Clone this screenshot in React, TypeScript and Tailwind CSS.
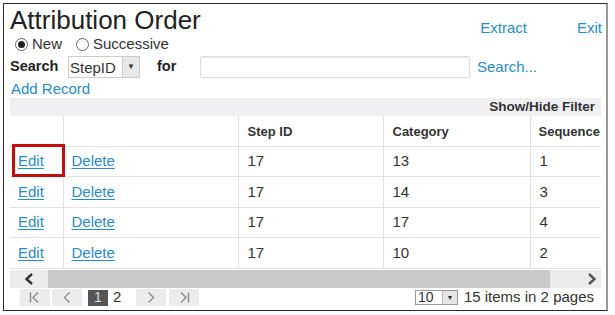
const link = "text-[#2a8cc4]";

const rows = [
  { step: "17", cat: "13", seq: "1" },
  { step: "17", cat: "14", seq: "3" },
  { step: "17", cat: "17", seq: "4" },
  { step: "17", cat: "10", seq: "2" },
];

function Radio({ checked, label }: { checked?: boolean; label: string }) {
  return (
    <label className="flex items-center gap-[4px]">
      <span className="w-[13px] h-[13px] rounded-full border border-[#666] bg-white flex items-center justify-center">
        {checked && <span className="w-[7px] h-[7px] rounded-full bg-[#222]" />}
      </span>
      <span>{label}</span>
    </label>
  );
}

function PagerBtn({ children }: { children: React.ReactNode }) {
  return (
    <div className="w-[30px] h-[17px] bg-[#ececec] flex items-center justify-center text-[#8a8a8a]">
      {children}
    </div>
  );
}

export default function App() {
  return (
    <div className="w-[615px] h-[315px] bg-white pt-[3px] pl-[3px] font-['Liberation_Sans',Arial,sans-serif] text-[#222] overflow-hidden">
      <div className="w-[605px] h-[308px] border border-[#2a2a2a] border-r-[#999] border-r-2 pl-[6px] flex flex-col overflow-hidden">
        <div className="flex items-end h-[30px]">
          <h1 className="text-[26px] leading-[28px] mt-[2px]">Attribution Order</h1>
          <div className={`ml-auto flex gap-[50px] text-[15px] ${link} mr-[4px] mb-[-5px]`}>
            <span>Extract</span>
            <span>Exit</span>
          </div>
        </div>
        <div className="flex items-center gap-[14px] text-[15px] h-[17px] ml-[5px] mt-[2px] text-[#333]">
          <Radio checked label="New" />
          <Radio label="Successive" />
        </div>
        <div className="flex items-center h-[24px] mt-[2px] text-[15px]">
          <span className="w-[58px] font-bold text-[14.5px]">Search</span>
          <div className="w-[72px] h-[22px] border border-[#ccc] flex items-stretch">
            <span className="flex-1 pl-[1px] leading-[21px] text-[15px] text-[#333]">StepID</span>
            <span className="w-[17px] bg-[#e8e8e8] border-l border-[#ccc] flex items-center justify-center text-[8px] text-[#333]">▼</span>
          </div>
          <span className="ml-[17px] w-[23px] font-bold text-[14.5px]">for</span>
          <div className="ml-[20px] w-[270px] h-[22px] border border-[#ddd] rounded-[2px] shadow-[inset_0_1px_2px_rgba(0,0,0,0.1)]" />
          <span className={`ml-[7px] ${link}`}>Search...</span>
        </div>
        <div className={`text-[15px] h-[18px] leading-[18px] mt-[1px] ml-[1px] ${link}`}>Add Record</div>
        <div className="w-[591px] flex flex-col overflow-hidden">
          <div className="h-[18px] bg-[#f0f0f3] flex items-center justify-end pr-[6px] text-[13.5px] font-bold text-[#333]">
            Show/Hide Filter
          </div>
          <table className="border-collapse text-[15px] table-fixed w-[620px]">
            <colgroup>
              <col className="w-[53px]" />
              <col className="w-[175px]" />
              <col className="w-[145px]" />
              <col className="w-[147px]" />
              <col className="w-[100px]" />
            </colgroup>
            <thead>
              <tr className="h-[30px] text-[13px] font-bold text-[#333] text-left">
                <th className="border-r border-b border-[#e2e2e2]" />
                <th className="border-r border-b border-[#e2e2e2]" />
                <th className="border-r border-b border-[#e2e2e2] pl-[9px] pt-[2px] font-bold">Step ID</th>
                <th className="border-r border-b border-[#e2e2e2] pl-[9px] pt-[2px] font-bold">Category</th>
                <th className="border-b border-[#e2e2e2] pl-[8px] pt-[2px] font-bold">Sequence</th>
              </tr>
            </thead>
            <tbody>
              {rows.map((r, i) => (
                <tr key={i} className="h-[30.5px] text-[#333]">
                  <td className="border-r border-b border-[#e2e2e2] pl-[8px] relative">
                    <span className={`${link} underline underline-offset-2`}>Edit</span>
                    {i === 0 && (
                      <div className="absolute left-[2px] top-[-3px] w-[53px] h-[33px] border-[3px] border-[#c40d0d]" />
                    )}
                  </td>
                  <td className="border-r border-b border-[#e2e2e2] pl-[8px]">
                    <span className={`${link} underline underline-offset-2`}>Delete</span>
                  </td>
                  <td className="border-r border-b border-[#e2e2e2] pl-[9px]">{r.step}</td>
                  <td className="border-r border-b border-[#e2e2e2] pl-[9px]">{r.cat}</td>
                  <td className="border-b border-[#e2e2e2] pl-[9px]">{r.seq}</td>
                </tr>
              ))}
            </tbody>
          </table>
          <div className="h-[18px] mt-[1px] bg-[#ececec] flex items-center">
            <div className="w-[38px] flex items-center justify-center">
              <svg width="10" height="12" viewBox="0 0 10 12">
                <path d="M8 1 L2.5 6 L8 11" fill="none" stroke="#333" strokeWidth="2.4" />
              </svg>
            </div>
            <div className="w-[502px] h-[18px] bg-[#c9c9c9]" />
            <div className="flex-1 flex items-center justify-end pr-[4px]">
              <svg width="10" height="12" viewBox="0 0 10 12">
                <path d="M2 1 L7.5 6 L2 11" fill="none" stroke="#555" strokeWidth="2.4" />
              </svg>
            </div>
          </div>
          <div className="h-[20px] flex items-center text-[15px]">
            <div className="ml-[10px] flex items-center gap-[2px]">
              <PagerBtn>
                <svg width="12" height="11" viewBox="0 0 12 11">
                  <path d="M1.5 0.5 V10.5 M9 0.5 L4 5.5 L9 10.5" fill="none" stroke="#8a8a8a" strokeWidth="1.4" />
                </svg>
              </PagerBtn>
              <PagerBtn>
                <svg width="8" height="11" viewBox="0 0 8 11">
                  <path d="M6.5 0.5 L1.5 5.5 L6.5 10.5" fill="none" stroke="#8a8a8a" strokeWidth="1.4" />
                </svg>
              </PagerBtn>
            </div>
            <span className="ml-[6px] w-[20px] h-[16px] bg-[#555] text-[#ddd] flex items-center justify-center text-[14px]">1</span>
            <span className="ml-[5px] w-[14px] text-[#333]">2</span>
            <div className="ml-[9px] flex items-center gap-[3px]">
              <PagerBtn>
                <svg width="8" height="11" viewBox="0 0 8 11">
                  <path d="M1.5 0.5 L6.5 5.5 L1.5 10.5" fill="none" stroke="#8a8a8a" strokeWidth="1.4" />
                </svg>
              </PagerBtn>
              <PagerBtn>
                <svg width="12" height="11" viewBox="0 0 12 11">
                  <path d="M3 0.5 L8 5.5 L3 10.5 M10.5 0.5 V10.5" fill="none" stroke="#8a8a8a" strokeWidth="1.4" />
                </svg>
              </PagerBtn>
            </div>
            <div className="ml-auto flex items-center mr-[7px]">
              <div className="w-[43px] h-[15px] border border-[#999] flex items-stretch text-[14px] leading-[13px] text-[#333]">
                <span className="flex-1 pl-[2px]">10</span>
                <span className="w-[15px] bg-[#e6e6e6] border-l border-[#bbb] flex items-center justify-center text-[7px]">▼</span>
              </div>
              <span className="ml-[6px] text-[15px] text-[#333]">15 items in 2 pages</span>
            </div>
          </div>
        </div>
      </div>
    </div>
  );
}
